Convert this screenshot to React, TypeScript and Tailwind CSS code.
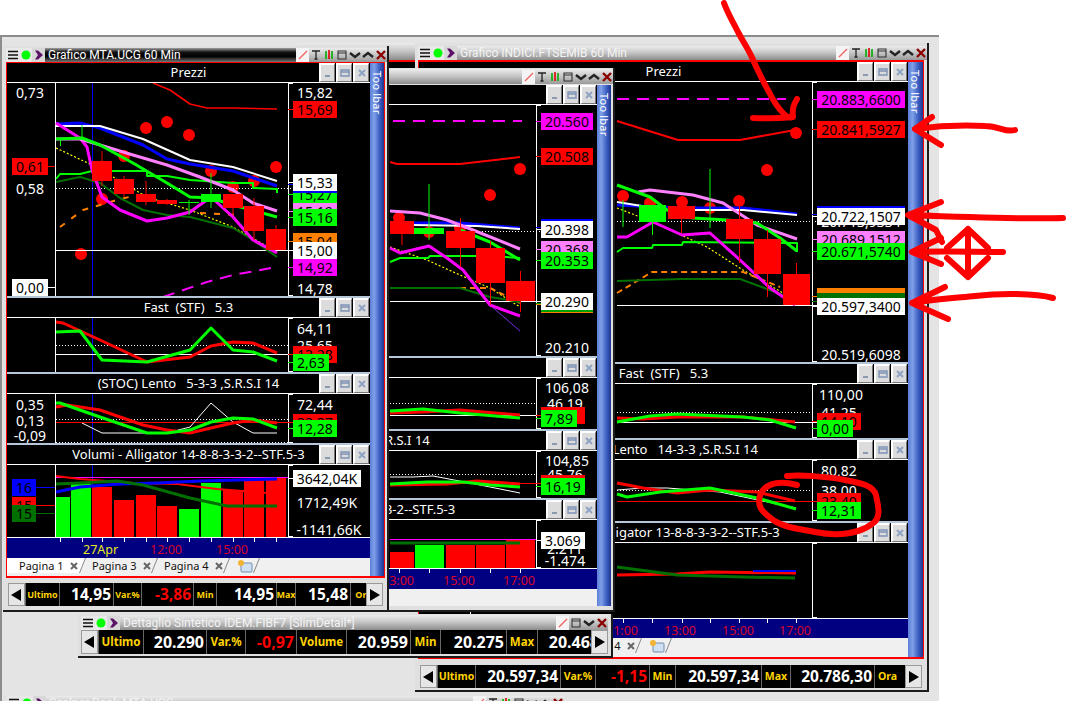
import React from "react";

type Lab = { t: string; y: number; x: number; w: number; bg?: string; fg?: string };
const RED = "#ff0000", GRN = "#00ff00", MAG = "#ff00ff", PNK = "#ff80ff", BLU = "#0000ff", WHT = "#ffffff", ORG = "#ff8000", DGR = "#007000", YEL = "#ffff00";

function P({ p, c, w = 1, d }: { p: string; c: string; w?: number; d?: string }) {
  return <polyline points={p} fill="none" stroke={c} strokeWidth={w} strokeDasharray={d} strokeLinejoin="round" />;
}
function Dots({ a }: { a: number[][] }) {
  return <>{a.map(([x, y], i) => <circle key={i} cx={x} cy={y} r={6} fill={RED} />)}</>;
}
function Candles({ a }: { a: (number | string)[][] }) {
  return (
    <>
      {a.map((r, i) => {
        const [x1, x2, y1, y2, w1, w2, c] = r as [number, number, number, number, number, number, string];
        const m = (x1 + x2) / 2;
        return (
          <g key={i}>
            <line x1={m} x2={m} y1={w1} y2={w2} stroke={c} />
            <rect x={x1} y={y1} width={x2 - x1} height={y2 - y1} fill={c} />
          </g>
        );
      })}
    </>
  );
}
function Bars({ a, b }: { a: (number | string)[][]; b: number }) {
  return (
    <>
      {a.map((r, i) => {
        const [x1, x2, y, c] = r as [number, number, number, string];
        return <rect key={i} x={x1} y={y} width={x2 - x1} height={b - y} fill={c} />;
      })}
    </>
  );
}
function HL({ y, x1, x2, dot, c = WHT }: { y: number; x1: number; x2: number; dot?: boolean; c?: string }) {
  return <line x1={x1} x2={x2} y1={y + 0.5} y2={y + 0.5} stroke={c} strokeDasharray={dot ? "1 2" : undefined} />;
}

function PaneBtn({ k }: { k: "min" | "max" | "close" }) {
  return (
    <div className="flex h-[19px] w-[16px] items-center justify-center border-t-2 border-l-2 border-white border-b border-r border-b-[#777] border-r-[#777] bg-[#dcdcdc]">
      <svg width="10" height="10" viewBox="0 0 10 10">
        {k === "min" && <rect x="2" y="7" width="5" height="2" fill="#8a9ab0" />}
        {k === "max" && <path d="M1 2h8v6h-8z M1 2h8v2h-8z" fill="none" stroke="#7f93b5" strokeWidth="1.4" />}
        {k === "close" && <path d="M2 2l6 6M8 2l-6 6" stroke="#8fa3c4" strokeWidth="2" />}
      </svg>
    </div>
  );
}

function Pane({
  title, panelX, panelW, plotL, plotR, top, h, labels = [], sep = true, children,
}: {
  title: string; panelX: number; panelW: number; plotL: number; plotR: number; top: number; h: number;
  labels?: Lab[]; sep?: boolean; children?: React.ReactNode;
}) {
  return (
    <div className={sep ? "border-t-2 border-[#b4c6d8] shrink-0" : "shrink-0"}>
      <div className="relative flex h-[20px] items-center justify-center border-b border-white bg-black text-[13px] leading-none text-white whitespace-pre">
        {title}
        <div className="absolute right-[1px] top-0 flex gap-[1px]">
          <PaneBtn k="min" /><PaneBtn k="max" /><PaneBtn k="close" />
        </div>
      </div>
      <div className="relative overflow-hidden bg-black" style={{ height: h }}>
        <svg className="absolute left-0 top-0" width={panelW} height={h} viewBox={`${panelX} ${top} ${panelW} ${h}`}>
          <line x1={plotL + 0.5} x2={plotL + 0.5} y1={top} y2={top + h} stroke={WHT} />
          <line x1={plotR + 0.5} x2={plotR + 0.5} y1={top} y2={top + h} stroke={WHT} />
          <line x1={plotR} x2={plotR + 5} y1={top + 0.5} y2={top + 0.5} stroke={WHT} />
          <line x1={plotR} x2={plotR + 5} y1={top + h - 0.5} y2={top + h - 0.5} stroke={WHT} />
          {children}
        </svg>
        {labels.map((l, i) => (
          <React.Fragment key={i}>
            {l.bg && (
              <div
                className="absolute h-[1px]"
                style={l.x < plotL
                  ? { left: l.x + l.w - panelX, width: plotL - l.x - l.w, top: l.y + 8 - top, background: l.bg }
                  : { left: plotR - panelX, width: l.x - plotR, top: l.y + 8 - top, background: l.bg }}
              />
            )}
            <div
              className="absolute flex h-[17px] items-center justify-center overflow-hidden text-[14px] leading-none whitespace-nowrap"
              style={{ left: l.x - panelX, top: l.y - top, width: l.w, background: l.bg, color: l.fg ?? (l.bg ? "#000" : "#fff") }}
            >
              {l.t}
            </div>
          </React.Fragment>
        ))}
      </div>
    </div>
  );
}

function Strip({ panelX, panelW, top, h, ticks, labels }: { panelX: number; panelW: number; top: number; h: number; ticks: number[]; labels: { t: string; x: number; c: string }[] }) {
  return (
    <div className="relative shrink-0 overflow-hidden border-t border-white bg-[#000080]" style={{ height: h }}>
      <svg className="absolute left-0 top-0" width={panelW} height={4} viewBox={`${panelX} 0 ${panelW} 4`}>
        {ticks.map((x) => <line key={x} x1={x + 0.5} x2={x + 0.5} y1="0" y2="4" stroke={WHT} />)}
      </svg>
      {labels.map((l) => (
        <span key={l.t + l.x} className="absolute top-[4px] text-[12.5px] leading-[16px]" style={{ left: l.x - panelX, color: l.c }}>{l.t}</span>
      ))}
    </div>
  );
}

function XMark() {
  return (
    <svg className="ml-[6px] shrink-0" width="8" height="8" viewBox="0 0 8 8">
      <path d="M1 1l6 6M7 1l-6 6" stroke="#666" strokeWidth="2" />
    </svg>
  );
}
function Tab({ t, w, active }: { t: string; w: string; active?: boolean }) {
  return (
    <div className={`relative flex h-full shrink-0 items-center ${active ? "pl-[12px]" : "pl-[6px]"} ${w}`}>
      {active && <div className="absolute inset-0 bg-white [clip-path:polygon(0_0,100%_0,calc(100%-6px)_100%,0_100%)]" />}
      <span className="relative whitespace-nowrap text-[11px] leading-none text-[#111]">{t}</span>
      <span className="relative"><XMark /></span>
      <svg className="absolute bottom-0 right-0" width="7" height="15" viewBox="0 0 7 15">
        <line x1="6.5" y1="0" x2="0.5" y2="15" stroke="#888" />
      </svg>
    </div>
  );
}
function Tabs({ h }: { h: string }) {
  return (
    <div className={`flex shrink-0 items-start bg-[#f0f0f0] ${h}`}>
      <div className="flex h-[15px]">
        <Tab t="Pagina 1" w="w-[79px]" active />
        <Tab t="Pagina 3" w="w-[72px]" />
        <Tab t="Pagina 4" w="w-[72px]" />
        <div className="relative flex w-[30px] items-center pl-[6px]">
          <svg width="18" height="14" viewBox="0 0 18 14">
            <rect x="5" y="4" width="11" height="9" rx="1" fill="#cfe0f2" stroke="#6f8fb0" />
            <circle cx="5" cy="4" r="3" fill="#f2b233" />
          </svg>
          <svg className="absolute bottom-0 right-0" width="7" height="15" viewBox="0 0 7 15">
            <line x1="6.5" y1="0" x2="0.5" y2="15" stroke="#888" />
          </svg>
        </div>
      </div>
    </div>
  );
}

function Toolbar({ w }: { w: string }) {
  return (
    <div className={`flex shrink-0 justify-center bg-[linear-gradient(90deg,#5b7fd8,#7f9fe8_30%,#3a5cc0_70%,#1f358f)] pt-[8px] ${w}`}>
      <span className="text-[11px] leading-none tracking-[0.2px] text-white [writing-mode:vertical-rl]">Too lbar</span>
    </div>
  );
}

function I({ children, bg }: { children: React.ReactNode; bg?: string }) {
  return (
    <span className={`flex h-[14px] w-[13px] shrink-0 items-center justify-center ${bg ?? ""}`}>
      <svg width="12" height="12" viewBox="0 0 12 12">{children}</svg>
    </span>
  );
}
const Left3 = () => (
  <>
    <I bg="bg-[#e8e8e8]"><path d="M1 2.5h10M1 6h10M1 9.5h10" stroke="#111" strokeWidth="1.4" /></I>
    <I bg="bg-[#e8e8e8]"><circle cx="6" cy="6" r="4.5" fill="#00ff00" /></I>
    <I bg="bg-[#d8d8d8]"><path d="M2 1.5h3l5 4.5-5 4.5h-3l3-4.5z" fill="#5c1266" /></I>
  </>
);
const IcSlash = () => <I bg="bg-[#f4f4f4]"><path d="M2 10L10 2" stroke="#f06060" strokeWidth="1.2" /></I>;
const IcT = () => <I><path d="M2 2h8M6 2v8M4.5 10h3" stroke="#222" strokeWidth="1.3" fill="none" /></I>;
const IcC = () => <I><path d="M3 2v8M9 2v8" stroke="#00b000" strokeWidth="1.6" /><path d="M6 1v9" stroke="#e00000" strokeWidth="1.6" /></I>;
const IcB = () => <I><path d="M2 2h8v8h-8z M2 4h8" fill="none" stroke="#333" strokeWidth="1.1" /></I>;
const IcD = () => <I><path d="M1 4l5 4 5-4" fill="none" stroke="#222" strokeWidth="2.4" /></I>;
const IcU = () => <I><path d="M1 8l5-4 5 4" fill="none" stroke="#222" strokeWidth="2.4" /></I>;
const IcX = () => <I><path d="M2 2l8 8M10 2l-8 8" stroke="#8b0000" strokeWidth="2.4" /></I>;
const Right7 = () => <><IcSlash /><IcT /><IcC /><IcB /><IcD /><IcU /><IcX /></>;

const ACTIVE = "bg-[linear-gradient(#a0a0a0,#111_30%,#000_60%,#777)] text-white";
const IDLE = "bg-[linear-gradient(#ececec,#c8c8c8_45%,#8c8c8c)] text-[#f4f4f4]";

function Title({ t, active, right, h = "h-[14px]" }: { t: string; active?: boolean; right: React.ReactNode; h?: string }) {
  return (
    <div className={`flex shrink-0 items-center ${h}`}>
      <Left3 />
      <div className={`flex h-full min-w-0 flex-1 items-center overflow-hidden pl-[3px] font-['Roboto',sans-serif] text-[12px] leading-none whitespace-nowrap ${active ? ACTIVE : IDLE}`}>{t}</div>
      <div className="flex h-full shrink-0 items-center bg-[linear-gradient(#ececec,#c8c8c8_45%,#9a9a9a)]">{right}</div>
    </div>
  );
}

function Arrow({ dir }: { dir: "l" | "r" }) {
  return (
    <div className="flex w-[17px] shrink-0 items-center justify-center border border-[#9a9a9a] bg-[#e6e6e6]">
      <svg width="11" height="12" viewBox="0 0 11 12">
        <path d={dir === "l" ? "M10 0v12L0 6z" : "M1 0v12l10-6z"} fill="#000" />
      </svg>
    </div>
  );
}
type Cell = [string, number, boolean?];
function Status({ cells, lab, val, h }: { cells: Cell[]; lab: string; val: string; h: string }) {
  return (
    <div className={`flex shrink-0 ${h}`}>
      <Arrow dir="l" />
      <div className="flex min-w-0 flex-1 overflow-hidden bg-black">
        {cells.map(([t, w, red], i) =>
          i % 2 === 0 ? (
            <div key={i} className={`flex shrink-0 items-center justify-center overflow-hidden border-l border-[#666] font-bold leading-none whitespace-nowrap text-[#ffd400] ${lab}`} style={{ width: w }}>{t}</div>
          ) : (
            <div key={i} className={`flex shrink-0 items-center justify-end overflow-hidden border-l border-[#666] pr-[2px] font-bold leading-none whitespace-nowrap ${val} ${red ? "text-[#ff0000]" : "text-white"}`} style={{ width: w }}>{t}</div>
          )
        )}
      </div>
      <Arrow dir="r" />
    </div>
  );
}

const Winframe = "absolute flex flex-col border-r-2 border-b-2 border-[#1c1c1c] bg-[#e0e0e0]";

function lb(t: string, y: number, bg?: string, w = 44, x = 293): Lab {
  return { t, y, x, w, bg };
}
const c = (t: string, cy: number, x = 293, w = 44): Lab => ({ t, y: cy - 8, x, w });

const TICKS1 = [60, 82, 102, 124, 146, 167, 189, 211, 233, 254, 276];

function Window1() {
  const px = 7, pw = 363, L = 55, R = 288;
  const blue = (t: number, h: number) => <line x1="92.5" x2="92.5" y1={t} y2={t + h} stroke={BLU} />;
  return (
    <div className={`${Winframe} left-[3px] top-[46px] z-30 h-[566px] w-[386px] pl-[3px] pt-[2px]`}>
      <Title t="Grafico MTA.UCG 60 Min" active right={<Right7 />} />
      <div className="flex w-[379px] shrink-0 border border-b-2 border-[#ff0000]">
        <div className="flex w-[363px] flex-col bg-black">
          <Pane title="Prezzi" sep={false} panelX={px} panelW={pw} plotL={L} plotR={R} top={83} h={213}
            labels={[
              c("0,73", 92, 12, 36), { t: "0,61", y: 158, x: 12, w: 36, bg: RED }, c("0,58", 188, 12, 36), { t: "0,00", y: 279, x: 12, w: 36, bg: WHT },
              c("15,82", 92), lb("15,69", 101, RED),
              lb("15,27", 186, GRN), lb("15,19", 203, PNK), lb("15,16", 209, GRN), lb("", 176, BLU), lb("15,33", 174, WHT),
              lb("15,04", 233, ORG), lb("15,00", 242, WHT), lb("14,92", 259, MAG), c("14,78", 288),
            ]}>
            {blue(83, 213)}
            <Dots a={[[81, 254], [102, 199], [124, 156], [146, 128], [167, 122], [189, 135], [211, 171], [233, 187], [254, 181], [276, 167]]} />
            <HL y={250} x1={56} x2={288} />
            <HL y={188} x1={56} x2={293} dot />
            <P c={RED} w={1.6} p="153,83 170,90 190,104 207,108 233,108 277,109" />
            <P c={YEL} w={1.2} d="2 2" p="56,148 92,165 113,177 147,197 190,210 233,227 277,252" />
            <P c={ORG} w={2} d="6 8" p="60,227 83,210 117,200 137,195" />
            <P c={ORG} w={2} d="6 8" p="200,213 240,215" />
            <P c={DGR} w={2} p="56,182 80,177 100,183 120,198 143,210 167,215 190,217 233,228 253,240 277,257" />
            <P c={GRN} w={2} p="56,179 60,174 80,174 92,171 147,171 147,176 167,176 190,180 233,183 253,183 253,188 277,189 277,193" />
            <P c={BLU} w={3} p="56,124 80,123 100,128 143,145 167,159 190,164 233,171 277,186" />
            <P c={WHT} w={2} p="56,126 80,126 100,126 143,139 190,160 233,167 277,181" />
            <P c={MAG} w={3} p="56,123 80,138 87,147 92,170 102,197 120,210 147,221 167,218 190,212 211,197 233,217 253,240 277,253" />
            <P c={PNK} w={3} p="56,139 80,139 100,145 133,155 167,165 200,177 233,190 253,203 277,211" />
            <P c={GRN} w={3} p="56,139 82,138 100,145 133,163 167,183 190,197 211,198 233,205 277,217" />
            <P c={MAG} w={2} d="12 8" p="163,297 207,282 233,275 277,267" />
            <line x1="60.5" x2="60.5" y1="139" y2="146" stroke={GRN} />
            <line x1="82" x2="82" y1="125" y2="140" stroke={GRN} />
            <Candles a={[
              [92, 112, 161, 181, 151, 186, RED], [114, 134, 179, 194, 176, 197, RED], [136, 156, 194, 202, 181, 205, RED], [157, 177, 200, 204, 199, 205, RED],
              [179, 199, 202, 203, 200, 215, GRN], [201, 221, 194, 202, 173, 208, GRN], [223, 243, 194, 208, 194, 215, RED], [244, 264, 206, 231, 198, 240, RED], [266, 286, 229, 250, 225, 250, RED],
            ]} />
          </Pane>
          <Pane title="Fast  (STF)   5.3" panelX={px} panelW={pw} plotL={L} plotR={R} top={318} h={54}
            labels={[c("64,11", 328), c("25,65", 345), lb("13,28", 346, RED), lb("2,63", 354, GRN, 36)]}>
            {blue(318, 54)}
            <HL y={345} x1={56} x2={288} dot />
            <HL y={354} x1={56} x2={288} />
            <P c={RED} w={3} p="56,322 63,323 100,340 147,362 190,357 211,346 233,342 253,343 277,353" />
            <P c={GRN} w={3} p="56,332 80,331 102,360 147,362 190,350 211,328 233,350 253,352 277,361" />
          </Pane>
          <Pane title="(STOC) Lento   5-3-3 ,S.R.S.I 14" panelX={px} panelW={pw} plotL={L} plotR={R} top={394} h={49}
            labels={[c("0,35", 404, 12, 36), c("0,13", 420, 12, 36), c("-0,09", 435, 12, 36), c("72,44", 404), lb("32,37", 414, RED), lb("12,28", 420, GRN)]}>
            {blue(394, 49)}
            <HL y={419} x1={56} x2={288} dot />
            <HL y={422} x1={56} x2={293} c={RED} />
            <HL y={442} x1={56} x2={288} dot />
            <P c={WHT} p="82,423 102,433 167,433 190,427 211,403 233,422 253,433 277,433" />
            <P c={RED} w={3} p="56,407 67,405 100,410 143,425 167,430 190,433 211,428 233,423 253,420 277,423" />
            <P c={GRN} w={3} p="56,403 60,403 100,417 147,433 167,433 190,430 211,422 233,418 253,419 277,428" />
          </Pane>
          <Pane title="Volumi - Alligator 14-8-8-3-3-2--STF.5-3" panelX={px} panelW={pw} plotL={L} plotR={R} top={465} h={72}
            labels={[{ t: "16", y: 479, x: 12, w: 24, bg: BLU }, { t: "15", y: 497, x: 12, w: 24, bg: RED }, { t: "15", y: 505, x: 12, w: 24, bg: DGR },
              lb("3642,04K", 470, WHT, 68), c("1712,49K", 502, 293, 68), c("-1141,66K", 529, 293, 72)]}>
            {blue(465, 20)}
            <Bars b={537} a={[[56, 70, 497, GRN], [71, 91, 484, GRN], [92, 112, 487, RED], [114, 134, 500, RED], [136, 156, 495, RED], [157, 177, 506, RED], [179, 199, 509, GRN], [201, 221, 483, GRN], [223, 243, 490, RED], [244, 264, 480, RED], [266, 286, 478, RED]]} />
            <HL y={477} x1={56} x2={288} c={MAG} />
            <P c={RED} w={2} p="56,476 80,479 133,483 177,484 217,489 267,493" />
            <P c={BLU} w={3} p="56,492 80,487 120,484 157,483 200,481 277,479" />
            <P c={DGR} w={3} p="56,484 80,483 117,481 143,485 190,498 227,506 277,506" />
          </Pane>
          <Strip panelX={px} panelW={pw} top={537} h={21} ticks={TICKS1}
            labels={[{ t: "27Apr", x: 83, c: "#e8e820" }, { t: "12:00", x: 150, c: "#d8002a" }, { t: "15:00", x: 216, c: "#d8002a" }]} />
          <Tabs h="h-[18px]" />
        </div>
        <Toolbar w="w-[14px]" />
      </div>
      <div className="mt-[5px] w-[377px] pl-[2px]">
        <Status h="h-[23px]" lab="text-[9px]" val="text-[15.5px]"
          cells={[["Ultimo", 34], ["14,95", 54], ["Var.%", 28], ["-3,86", 52, true], ["Min", 23], ["14,95", 60], ["Max", 19], ["15,48", 55], ["Ora", 26]]} />
      </div>
    </div>
  );
}

function Window2() {
  const px = 81, pw = 516, L = 139, R = 536;
  return (
    <div className={`${Winframe} left-[78px] top-[68px] z-20 h-[544px] w-[537px] pl-[3px] pt-[1px]`}>
      <Title t="Grafico MTA.UCG 60 Min" right={<Right7 />} h="h-[15px]" />
      <div className="flex w-[530px] shrink-0 pt-[1px]">
        <div className="flex w-[516px] flex-col bg-black">
          <Pane title="Prezzi" sep={false} panelX={px} panelW={pw} plotL={L} plotR={R} top={105} h={251}
            labels={[
              lb("20.560", 113, MAG, 52, 541), lb("20.508", 148, RED, 52, 541),
              lb("", 219, BLU, 52, 541), lb("20.398", 221, WHT, 52, 541),
              lb("20.368", 241, PNK, 52, 541), lb("20.353", 252, GRN, 52, 541),
              lb("", 296, ORG, 52, 541), lb("", 295, "#00a000", 52, 541), lb("20.290", 293, WHT, 52, 541),
              c("20.210", 347, 541, 52),
            ]}>
            <Dots a={[[399, 218], [429, 232], [460, 228], [490, 195], [520, 169]]} />
            <HL y={301} x1={390} x2={541} />
            <HL y={231} x1={470} x2={541} dot />
            <P c={MAG} w={2} d="12 8" p="393,121 522,121" />
            <P c={RED} w={2} p="390,162 397,164 460,164 520,157" />
            <P c={YEL} w={1.2} d="2 2" p="390,247 427,260 460,275 490,288 520,307" />
            <P c={ORG} w={2} d="6 4" p="430,288 490,288 520,303" />
            <P c={DGR} w={2} p="390,288 460,288 490,297 520,302" />
            <P c={GRN} w={2} p="390,262 400,258 428,258 430,256 490,256 520,258" />
            <P c={BLU} w={3} p="413,223 460,223 520,228" />
            <P c={WHT} w={2} p="413,225 477,226 520,229" />
            <P c={PNK} w={3} p="390,211 420,213 447,220 473,230 520,249" />
            <P c={GRN} w={3} p="460,230 490,242 520,260" />
            <P c="#7a2fe0" p="490,305 520,331" />
            <P c={MAG} w={3} p="390,248 400,253 429,246 447,258 463,270 490,305 520,316" />
            <Candles a={[[390, 414, 221, 234, 213, 245, RED], [414, 444, 228, 234, 184, 240, GRN], [446, 475, 231, 248, 218, 267, RED], [476, 505, 248, 283, 241, 305, RED], [506, 535, 281, 301, 271, 312, RED]]} />
          </Pane>
          <Pane title="Fast  (STF)   5.3" panelX={px} panelW={pw} plotL={L} plotR={R} top={378} h={51}
            labels={[c("106,08", 387, 541, 52), c("46,19", 403, 541, 48), lb("6,30", 407, RED, 44, 541), lb("7,89", 410, GRN, 36, 541)]}>
            <HL y={403} x1={390} x2={536} dot />
            <HL y={415} x1={390} x2={541} />
            <P c={RED} w={3} p="390,413 423,412 460,410 520,415" />
            <P c={GRN} w={3} p="390,411 423,409 460,413 520,418" />
          </Pane>
          <Pane title="(STOC) Lento   5-3-3 ,S.R.S.I 14" panelX={px} panelW={pw} plotL={L} plotR={R} top={451} h={47}
            labels={[c("104,85", 460, 541, 52), c("45,76", 474, 541, 48), lb("", 475, RED, 44, 541), lb("16,19", 478, GRN, 44, 541)]}>
            <HL y={474} x1={390} x2={536} dot />
            <HL y={483} x1={460} x2={541} c={RED} />
            <P c={WHT} p="390,477 413,477 433,476 470,483 520,493" />
            <P c={RED} w={3} p="390,485 447,484 477,481 520,484" />
            <P c={GRN} w={3} p="390,484 427,482 463,482 490,485 520,487" />
          </Pane>
          <Pane title="Volumi - Alligator 14-8-8-3-3-2--STF.5-3" panelX={px} panelW={pw} plotL={L} plotR={R} top={520} h={48}
            labels={[c("2.211", 548, 541, 48), lb("3.069", 532, WHT, 44, 541), c("-1.474", 560, 541, 48)]}>
            <Bars b={568} a={[[390, 414, 552, RED], [415, 444, 545, GRN], [446, 475, 545, RED], [476, 505, 545, RED], [506, 535, 540, RED]]} />
            <HL y={539} x1={390} x2={536} c={MAG} />
            <P c={DGR} w={3} p="390,543 520,543" />
          </Pane>
          <Strip panelX={px} panelW={pw} top={568} h={21} ticks={[399, 429, 460, 490, 520]}
            labels={[{ t: "13:00", x: 382, c: "#d8002a" }, { t: "15:00", x: 443, c: "#d8002a" }, { t: "17:00", x: 503, c: "#d8002a" }]} />
          <Tabs h="h-[17px]" />
        </div>
        <Toolbar w="w-[14px]" />
      </div>
    </div>
  );
}

function Window3() {
  const px = 419, pw = 489, L = 470, R = 812, X = 817, W = 88;
  return (
    <div className={`${Winframe} left-[415px] top-[43px] z-10 h-[649px] w-[514px] pl-[3px] pt-[3px]`}>
      <Title t="Grafico INDICI.FTSEMIB 60 Min" right={<Right7 />} />
      <div className="flex w-[506px] shrink-0 border border-t-2 border-b-2 border-[#ff0000]">
        <div className="flex w-[489px] flex-col bg-black">
          <Pane title="Prezzi" sep={false} panelX={px} panelW={pw} plotL={L} plotR={R} top={82} h={280}
            labels={[
              lb("20.883,6600", 91, MAG, W, X), lb("20.841,5927", 121, RED, W, X),
              c("20.713,9334", 221, X, W), lb("", 206, BLU, W, X), lb("20.722,1507", 208, WHT, W, X),
              lb("20.689,1512", 231, PNK, W, X), lb("20.671,5740", 243, GRN, W, X),
              lb("", 288, ORG, W, X), lb("", 293, DGR, W, X), lb("20.597,3400", 298, WHT, W, X),
              c("20.519,6098", 354, X, W),
            ]}>
            <Dots a={[[623, 196], [650, 203], [682, 202], [710, 208], [739, 201], [767, 170], [796, 133]]} />
            <HL y={305} x1={617} x2={817} />
            <HL y={221} x1={617} x2={817} dot />
            <P c={MAG} w={2} d="12 8" p="617,99 786,99" />
            <P c={RED} w={2} p="617,121 678,140 740,140 795,130" />
            <P c={YEL} w={1.2} d="2 2" p="617,208 653,222 707,247 743,270 783,293" />
            <P c={ORG} w={2} d="6 4" p="617,293 647,275 652,272 743,272 780,287" />
            <P c={DGR} w={2} p="617,281 682,279 740,279 783,295" />
            <P c={GRN} w={2} p="617,252 623,248 652,248 653,245 682,245 683,242 797,243 797,252" />
            <P c={BLU} w={3} p="617,205 677,208 743,208 797,214" />
            <P c={WHT} w={2} p="617,202 667,210 743,210 797,215" />
            <P c={PNK} w={3} p="638,192 650,190 693,195 723,203 757,225 797,239" />
            <P c={GRN} w={3} p="617,185 650,197 667,210 693,218 727,220 757,223 780,238 797,251" />
            <P c={MAG} w={3} p="617,237 627,237 653,222 682,235 710,233 740,260 770,288 795,305" />
            <line x1="623" x2="623" y1="200" y2="227" stroke={GRN} />
            <line x1="710" x2="710" y1="169" y2="228" stroke={GRN} />
            <Candles a={[[639, 666, 205, 222, 205, 235, GRN], [668, 695, 206, 219, 198, 233, RED], [726, 753, 219, 239, 203, 263, RED], [754, 781, 239, 274, 230, 297, RED], [783, 810, 274, 305, 263, 305, RED]]} />
          </Pane>
          <Pane title="Fast  (STF)   5.3" panelX={px} panelW={pw} plotL={L} plotR={R} top={384} h={54}
            labels={[c("110,00", 394, X, 48), c("41,25", 412, X, 44), lb("14,10", 413, RED, 44, X), lb("0,00", 420, GRN, 36, X)]}>
            <HL y={412} x1={617} x2={812} dot />
            <HL y={422} x1={617} x2={817} />
            <P c={RED} w={3} p="617,418 643,419 677,417 743,417 795,422" />
            <P c={GRN} w={3} p="617,422 650,416 677,414 743,417 770,420 796,428" />
          </Pane>
          <Pane title="(STOC) Lento   14-3-3 ,S.R.S.I 14" panelX={px} panelW={pw} plotL={L} plotR={R} top={460} h={61}
            labels={[c("80,82", 470, X, 44), c("38,00", 490, X, 44), lb("23,40", 493, RED, 44, X), lb("12,31", 502, GRN, 44, X)]}>
            <HL y={490} x1={617} x2={812} dot />
            <HL y={501} x1={617} x2={817} c={RED} />
            <P c={WHT} p="617,490 643,488 667,488 720,492 796,508" />
            <P c={RED} w={3} p="617,483 643,488 677,493 710,490 757,492 795,501" />
            <P c={GRN} w={3} p="617,494 627,497 660,492 710,488 757,498 796,509" />
          </Pane>
          <Pane title="Volumi - Alligator 13-8-8-3-3-2--STF.5-3" panelX={px} panelW={pw} plotL={L} plotR={R} top={543} h={75}>
            <P c={RED} w={3} p="617,575 677,574 710,572 796,573" />
            <P c={BLU} w={2} p="753,571 796,571" />
            <P c={DGR} w={3} p="617,567 677,575 743,577 795,578" />
          </Pane>
          <Strip panelX={px} panelW={pw} top={618} h={20} ticks={[623, 652, 682, 710, 739, 767, 796]}
            labels={[{ t: "11:00", x: 606, c: "#d8002a" }, { t: "13:00", x: 664, c: "#d8002a" }, { t: "15:00", x: 722, c: "#d8002a" }, { t: "17:00", x: 779, c: "#d8002a" }]} />
          <Tabs h="h-[19px]" />
        </div>
        <Toolbar w="w-[15px]" />
      </div>
      <div className="mt-[6px] w-[504px] pl-[2px]">
        <Status h="h-[23px]" lab="text-[10.5px]" val="text-[15.5px]"
          cells={[["Ultimo", 38], ["20.597,34", 85], ["Var.%", 35], ["-1,15", 54, true], ["Min", 26], ["20.597,34", 86], ["Max", 29], ["20.786,30", 84], ["Ora", 26]]} />
      </div>
    </div>
  );
}

function Window4() {
  return (
    <div className={`${Winframe} left-[78px] top-[614px] z-40 h-[44px] w-[535px] px-[3px] pt-[1px]`}>
      <Title t="Dettaglio Sintetico IDEM.FIBF7 [SlimDetail*]" h="h-[15px]" right={<><IcSlash /><IcB /><IcD /><IcX /></>} />
      <Status h="h-[24px]" lab="text-[11.5px]" val="text-[16px]"
        cells={[["Ultimo", 45], ["20.290", 63], ["Var.%", 39], ["-0,97", 51, true], ["Volume", 50], ["20.959", 64], ["Min", 30], ["20.275", 66], ["Max", 31], ["20.468", 64]]} />
    </div>
  );
}

function Annotations() {
  return (
    <svg className="pointer-events-none absolute left-0 top-0 z-50" width="1066" height="701" viewBox="0 0 1066 701">
      <g fill="none" stroke="#ff0000" strokeWidth="6" strokeLinecap="round" strokeLinejoin="round">
        <path d="M724 3C728 14 733 22 738 32C745 45 750 52 754 62C760 75 765 85 769 92C773 100 776 106 783 113C788 118 790 118 792 117" />
        <path d="M753 118Q775 119 793 117C792 108 794 104 797 99" />
        <path d="M1015 130C1005 133 1000 126 985 126C965 125 945 125 915 129M932 117L915 129L941 145" />
        <path d="M1063 218C1030 219 960 217 910 215M941 202L908 215L936 230L942 242" />
        <path d="M1003 252C975 252 945 251 913 252M941 238L912 252L941 264" />
        <path d="M1053 298C1035 293 1000 293 975 296C955 298 930 300 912 303M945 287L912 303L948 319" />
        <path d="M968 229V277M947 248L968 229L988 248M947 258L968 277L988 258" />
        <path d="M797 485Q770 478 761 493C755 507 764 513 773 520C785 528 800 529 815 532C840 537 860 533 872 524C882 518 878 505 876 495C873 485 860 483 845 480C825 476 800 475 787 476" />
      </g>
    </svg>
  );
}

export default function App() {
  return (
    <div className="relative h-[701px] w-[1066px] overflow-hidden bg-white font-['Noto_Sans',sans-serif]">
      <div className="mt-[35px] h-[666px] w-[939px] border-t-2 border-l-2 border-[#8c8c8c] bg-[#e4e4e4]" />
      <div className="absolute left-[300px] top-[43px] flex h-[40px] w-[115px] flex-col">
        <div className={`h-[17px] ${IDLE}`} />
        <div className="h-[2px] bg-[#ff0000]" />
        <div className="flex-1 bg-black" />
      </div>
      <Window3 />
      <Window2 />
      <Window1 />
      <Window4 />
      <div className="absolute left-[4px] top-[696px] z-10 w-[560px] bg-[#e0e0e0] pl-[3px]">
        <Title t="Scalper Book MTA.UCG" right={<Right7 />} />
      </div>
      <Annotations />
    </div>
  );
}
